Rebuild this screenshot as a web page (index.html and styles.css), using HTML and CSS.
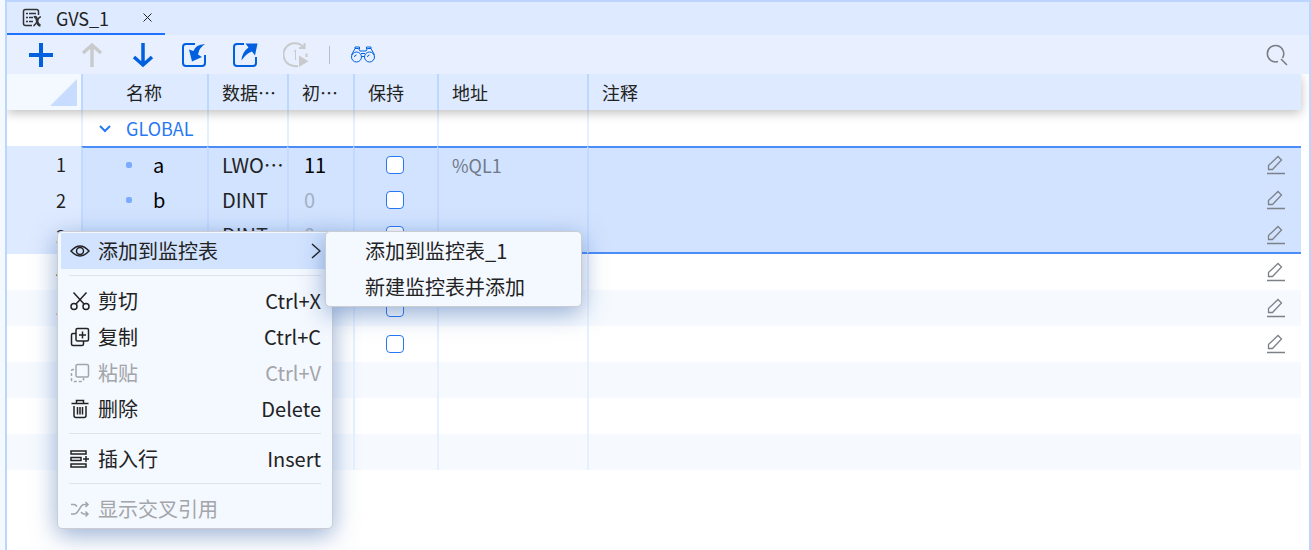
FILE: index.html
```html
<!doctype html>
<html lang="zh-CN">
  <head>
    <meta charset="utf-8">
    <meta name="viewport" content="width=device-width, initial-scale=1">
    <title>GVS_1</title>
    <link rel="stylesheet" href="styles.css">
  </head>
  <body>
    <!-- shared icon -->
    <svg class="defs" width="0" height="0">
      <symbol id="edit" viewBox="0 0 20 20">
        <path d="M2.500 10.500L12 1.500L15.500 5L6.500 14.500H2.500Z M1 18.500H19" />
      </symbol>
    </svg>

    <main class="window">
      <div class="tabs">
        <div class="tab">
          <svg class="tab__icon" width="20" height="20" viewBox="0 0 20 20">
            <path d="M10 17.500H3.500Q1.500 17.500 1.500 15.500V3.500Q1.500 1.500 3.500 1.500H14.500Q16.500 1.500 16.500 3.500V7" />
            <path d="M4 5.500h2M7 5.500h7M4 9.500h2M7 9.500h4M4 13.500h2M7 13.500h4" />
            <path class="bold" d="M12 9.500Q14.500 8 15 12.500T18.500 17.500" />
            <path d="M19 9Q17 8.500 15.500 12.500T11.500 18" />
          </svg>
          <span class="tab__title">GVS_1</span>
          <button class="tab__close" aria-label="关闭">
            <svg width="9" height="9" viewBox="0 0 9 9"><path d="M.5 .5l8 8M8.500 .5l-8 8" /></svg>
          </button>
        </div>
      </div>

      <div class="toolbar">
        <button class="tool" aria-label="添加">
          <svg width="26" height="26" viewBox="0 0 26 26"><path class="thick" d="M13 1v24M1 13h24" /></svg>
        </button>
        <button class="tool tool_off" aria-label="上移" disabled>
          <svg width="26" height="26" viewBox="0 0 26 26"><path class="arrow" d="M13 25V3M4 11L13 3l9 8" /></svg>
        </button>
        <button class="tool" aria-label="下移">
          <svg width="26" height="26" viewBox="0 0 26 26"><path class="arrow" d="M13 1v22M4 15L13 23l9-8" /></svg>
        </button>
        <button class="tool" aria-label="导入">
          <svg width="26" height="26" viewBox="0 0 26 26">
            <path class="frame" d="M14 2H5Q2 2 2 5V21Q2 24 5 24H21Q24 24 24 21V13" />
            <path class="solid" d="M24 2Q14.500 2.500 12.500 9L8 7.500L11 19.500L21 15L17 12.500Q18 6 24 2Z" />
          </svg>
        </button>
        <button class="tool" aria-label="导出">
          <svg width="26" height="26" viewBox="0 0 26 26">
            <path class="frame" d="M12 2H5Q2 2 2 5V21Q2 24 5 24H21Q24 24 24 21V15" />
            <path class="solid" d="M9.500 18.500Q10 10 16.500 5.500L13.500 1.500L25.500 1.500L23 13.500L20 9.500Q14 11.500 9.500 18.500Z" />
          </svg>
        </button>
        <button class="tool tool_off" aria-label="单次执行" disabled>
          <svg width="26" height="26" viewBox="0 0 26 26">
            <path class="frame" d="M15 24Q12 24.500 9 23.500A11.300 11.300 0 1 1 21 6M16 6h5.500V1M23.500 11.500v3.500" />
            <path d="M10.500 9.500L12.500 8V18" />
            <path class="solid" d="M16 13.500l9.500 5.800-9.500 5.700Z" />
          </svg>
        </button>
        <span class="toolbar__line"></span>
        <button class="tool" aria-label="监视">
          <svg width="26" height="26" viewBox="0 0 26 26">
            <circle cx="6.500" cy="15" r="5" /><circle cx="19.500" cy="15" r="5" />
            <path d="M1.500 13L5 6.500H8.500L10 9H16L17.500 6.500H21L24.500 13M5 6.500V5H9.500V7M21 6.500V5H16.500V7M11 11.500h4M11.500 14.500h3M4.500 15q0-2 2-2M17.500 15q0-2 2-2" />
          </svg>
        </button>
        <button class="tool tool_search" aria-label="搜索">
          <svg width="22" height="22" viewBox="0 0 22 22"><path d="M12 17.500A8.200 8.200 0 1 1 16.500 14M15 15l6 6" /></svg>
        </button>
      </div>

      <div class="grid">
        <table class="table">
          <colgroup>
            <col class="col_num"><col class="col_name"><col class="col_type"><col class="col_init"><col class="col_keep"><col class="col_addr"><col>
          </colgroup>
          <thead>
            <tr>
              <th class="corner"><svg width="27" height="27" viewBox="0 0 27 27"><path d="M27 0V27H0Z" /></svg></th>
              <th class="name">名称</th>
              <th>数据…</th>
              <th>初…</th>
              <th>保持</th>
              <th>地址</th>
              <th>注释</th>
            </tr>
          </thead>
          <tbody>
            <tr>
              <td class="num"></td>
              <td class="group">
                <svg width="12" height="8" viewBox="0 0 12 8"><path d="M1 1l5 5 5-5" /></svg>GLOBAL
              </td>
              <td></td><td></td><td></td><td></td><td></td>
            </tr>
          </tbody>
          <tbody class="selected">
            <tr>
              <td class="num">1</td>
              <td class="var">a</td>
              <td class="value">LWO…</td>
              <td class="value value_set">11</td>
              <td class="keep"><input type="checkbox" aria-label="保持 a"></td>
              <td class="addr">%QL1</td>
              <td class="note"><button class="edit" aria-label="编辑注释"><svg width="20" height="20"><use href="#edit" /></svg></button></td>
            </tr>
            <tr>
              <td class="num">2</td>
              <td class="var">b</td>
              <td class="value">DINT</td>
              <td class="value value_default">0</td>
              <td class="keep"><input type="checkbox" aria-label="保持 b"></td>
              <td class="addr"></td>
              <td class="note"><button class="edit" aria-label="编辑注释"><svg width="20" height="20"><use href="#edit" /></svg></button></td>
            </tr>
            <tr>
              <td class="num">3</td>
              <td class="var"></td>
              <td class="value">DINT</td>
              <td class="value value_default">0</td>
              <td class="keep"><input type="checkbox" aria-label="保持 3"></td>
              <td class="addr"></td>
              <td class="note"><button class="edit" aria-label="编辑注释"><svg width="20" height="20"><use href="#edit" /></svg></button></td>
            </tr>
          </tbody>
          <tbody class="striped">
            <tr>
              <td class="num">4</td>
              <td></td><td></td><td></td>
              <td class="keep"><input type="checkbox" aria-label="保持 4"></td>
              <td></td>
              <td class="note"><button class="edit" aria-label="编辑注释"><svg width="20" height="20"><use href="#edit" /></svg></button></td>
            </tr>
            <tr>
              <td class="num">5</td>
              <td></td><td></td><td></td>
              <td class="keep"><input type="checkbox" aria-label="保持 5"></td>
              <td></td>
              <td class="note"><button class="edit" aria-label="编辑注释"><svg width="20" height="20"><use href="#edit" /></svg></button></td>
            </tr>
            <tr>
              <td class="num"></td>
              <td></td><td></td><td></td>
              <td class="keep"><input type="checkbox" aria-label="保持 6"></td>
              <td></td>
              <td class="note"><button class="edit" aria-label="编辑注释"><svg width="20" height="20"><use href="#edit" /></svg></button></td>
            </tr>
            <tr><td class="num"></td><td></td><td></td><td></td><td></td><td></td><td></td></tr>
            <tr><td class="num"></td><td></td><td></td><td></td><td></td><td></td><td></td></tr>
            <tr><td class="num"></td><td></td><td></td><td></td><td></td><td></td><td></td></tr>
          </tbody>
        </table>
      </div>
    </main>

    <!-- context menu -->
    <div class="menu menu_main" role="menu">
      <button class="item item_active" role="menuitem">
        <svg width="20" height="20" viewBox="0 0 20 20"><path d="M1 10Q10 0 19 10Q10 20 1 10Z" /><circle cx="10" cy="10" r="3.500" /></svg>
        <span>添加到监控表</span>
        <svg class="item__arrow" width="10" height="16" viewBox="0 0 10 16"><path d="M1 1l8 7-8 7" /></svg>
      </button>
      <hr>
      <button class="item" role="menuitem">
        <svg width="20" height="20" viewBox="0 0 20 20"><circle cx="4" cy="15.500" r="3" /><circle cx="16" cy="15.500" r="3" /><path d="M3.500 1.500L14 13M16.500 1.500L6 13" /></svg>
        <span>剪切</span><kbd>Ctrl+X</kbd>
      </button>
      <button class="item" role="menuitem">
        <svg width="20" height="20" viewBox="0 0 20 20"><rect x="6" y="1.500" width="12.500" height="12.500" rx="1.500" /><path d="M6 6.500H3Q1.500 6.500 1.500 8V17Q1.500 18.500 3 18.500H12Q13.500 18.500 13.500 17V14M9 8h7M12.500 4.500v7" /></svg>
        <span>复制</span><kbd>Ctrl+C</kbd>
      </button>
      <button class="item" role="menuitem" disabled>
        <svg width="20" height="20" viewBox="0 0 20 20"><rect x="6" y="1.500" width="12.500" height="12.500" rx="1.500" /><path stroke-dasharray="3 2" d="M4 6.500H3Q1.500 6.500 1.500 8V17Q1.500 18.500 3 18.500H12Q13.500 18.500 13.500 17V15" /></svg>
        <span>粘贴</span><kbd>Ctrl+V</kbd>
      </button>
      <button class="item" role="menuitem">
        <svg width="20" height="20" viewBox="0 0 20 20"><path d="M1.500 4.500H18.500M6.500 4.500V1.500H13.500V4.500M4 7V16.500Q4 18.500 6 18.500H14Q16 18.500 16 16.500V7M7.500 8v7.500M10 8v7.500M12.500 8v7.500" /></svg>
        <span>删除</span><kbd>Delete</kbd>
      </button>
      <hr>
      <button class="item" role="menuitem">
        <svg width="20" height="20" viewBox="0 0 20 20"><path d="M1 2h15v3H1ZM1 8.500h10v3H1ZM1 15h15v3H1ZM13 10h6M16 7v6" /></svg>
        <span>插入行</span><kbd>Insert</kbd>
      </button>
      <hr>
      <button class="item" role="menuitem" disabled>
        <svg width="20" height="20" viewBox="0 0 20 20"><path d="M1 5.500H4Q5.500 5.500 7 7.500M1 15H4Q6 15 7.500 13L11 7.500Q12.500 5.500 14 5.500H18M11 13Q12.500 15 14 15H18M15.500 3L18 5.500L15.500 8M15.500 12.500L18 15L15.500 17.500" /></svg>
        <span>显示交叉引用</span>
      </button>
    </div>

    <div class="menu menu_sub" role="menu">
      <button class="item" role="menuitem">添加到监控表_1</button>
      <button class="item" role="menuitem">新建监控表并添加</button>
    </div>
  </body>
</html>
```

FILE: styles.css
```css
* {
  box-sizing: border-box;
}
body {
  margin: 0;
  padding-left: 5px;
  background: #f4f8ff;
  color: #222;
  font-family: "Noto Sans CJK SC", sans-serif;
  font-size: 18px;
}
button {
  padding: 0;
  border: 0;
  background: none;
  color: inherit;
  font: inherit;
}
svg {
  display: block;
  flex: none;
  fill: none;
  stroke: currentColor;
}
.defs {
  position: absolute;
}
.window {
  min-height: 100vh;
  border: 2px solid #bcd5ff;
  border-bottom: 0;
  background: #fff;
}
/*--------------------------*/
.tabs {
  display: flex;
  height: 33px;
  background: #deeaff;
}
.tab {
  display: flex;
  align-items: center;
  width: 158px;
  padding: 0 13px 0 15px;
  border-bottom: 2px solid #1f72ff;
}
.tab__icon {
  color: #333;
  stroke-width: 1.500;
}
.tab__icon .bold {
  stroke-width: 2.500;
}
.tab__title {
  margin-left: 14px;
  line-height: 30px;
}
.tab__close {
  margin-left: auto;
}
/*--------------------------*/
.toolbar {
  display: flex;
  align-items: center;
  gap: 25px;
  height: 39px;
  padding: 0 21px;
  background: #e8f0ff;
}
.tool {
  color: #0060de;
}
.tool_off {
  color: #c9cacc;
}
.tool_search {
  margin-left: auto;
  color: #777c84;
  stroke-width: 1.500;
}
.thick {
  stroke-width: 4;
}
.arrow {
  stroke-width: 3.500;
}
.frame {
  stroke-width: 2;
}
.solid {
  fill: currentColor;
  stroke: none;
}
.toolbar__line {
  width: 1px;
  height: 18px;
  margin: 0 -5px;
  background: #b9c0cc;
}
/*--------------------------*/
.grid {
  padding-right: 8px;
  overflow: hidden;
}
.table {
  width: 100%;
  table-layout: fixed;
  border-spacing: 0;
}
.col_num { width: 74px; }
.col_name { width: 126px; }
.col_type { width: 80px; }
.col_init { width: 66px; }
.col_keep { width: 84px; }
.col_addr { width: 150px; }

.table thead {
  position: relative;
  box-shadow: 0 3px 10px #00000040;
}
.table th,
.table td {
  height: 36px;
  padding: 0 0 0 13px;
  border-left: 2px solid #e6f0ff;
  line-height: 34px;
  text-align: left;
  white-space: nowrap;
}
.table th {
  border-color: #bcd8ff;
  background: #deeaff;
  font-weight: normal;
}
.table th.name {
  padding-left: 43px;
}
.table th.corner {
  padding: 0 4px 0 0;
  border: 0;
  background: #f4f8ff;
}
.corner svg {
  margin-left: auto;
  fill: #c8dcff;
  stroke: none;
}
.table td.num {
  padding-right: 15px;
  border: 0;
  text-align: right;
}
.table td.group {
  padding-left: 16px;
  color: #2878f5;
}
.group svg {
  display: inline-block;
  margin-right: 15px;
  vertical-align: 3px;
  stroke-width: 2;
}
.table td.var {
  padding-left: 43px;
  color: #000;
  font-size: 20px;
}
.var:not(:empty)::before {
  content: "";
  display: inline-block;
  width: 6px;
  height: 6px;
  margin-right: 21px;
  border-radius: 2px;
  background: #7aabff;
  vertical-align: 5px;
}
.value {
  font-size: 20px;
}
.table .value_set,
.table .value_default {
  padding-left: 15px;
  color: #000;
}
.table .value_default {
  color: #a3b0c4;
}
.addr {
  color: #707a89;
}
.table td.keep {
  padding-left: 31px;
}
.keep input {
  display: block;
  appearance: none;
  width: 18px;
  height: 18px;
  margin: 0;
  border: 1px solid #2878f5;
  border-radius: 4px;
  background: #fff;
}
.edit {
  display: block;
  margin: 0 15px 0 auto;
  color: #7d8188;
  stroke-width: 1.300;
}
/*--------------------------*/
.selected td {
  background: #d2e3ff;
  border-left-color: #c3daff;
}
.selected .num {
  background: #deeaff;
}
.selected tr:first-child td:not(.num) {
  border-top: 2px solid #4a8dfa;
  line-height: 32px;
}
.selected tr:last-child td:not(.num) {
  border-bottom: 2px solid #4a8dfa;
}
.striped tr:nth-child(even) td {
  background: #f6faff;
}
/*--------------------------*/
.menu {
  position: absolute;
  padding: 1px 3px;
  border: 1px solid #cbcdd2;
  border-radius: 5px;
  background: #f4f8ff;
  box-shadow: 0 6px 24px #2f5fa880;
  font-size: 20px;
}
.menu_main {
  top: 231px;
  left: 57px;
  width: 276px;
}
.menu_sub {
  top: 231px;
  left: 325px;
  width: 257px;
}
.item {
  display: flex;
  align-items: center;
  gap: 8px;
  width: 100%;
  height: 36px;
  padding: 0 8px 0 9px;
  line-height: 36px;
}
.item:disabled {
  color: #a3a5a8;
}
.item svg {
  stroke-width: 1.500;
}
.item_active {
  background: #d2e3ff;
}
.item kbd,
.item__arrow {
  margin-left: auto;
  font: inherit;
}
.menu_sub .item {
  padding-left: 36px;
}
.menu hr {
  height: 1px;
  margin: 6px 8px 7px;
  border: 0;
  background: #dfe3e9;
}
```
